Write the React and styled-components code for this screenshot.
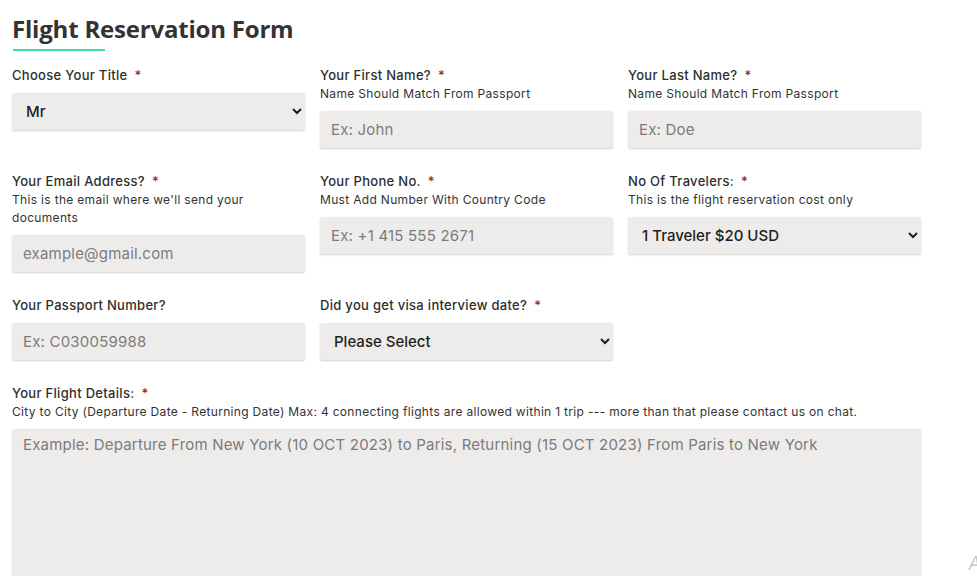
import styled, { createGlobalStyle } from "styled-components";

const GlobalStyle = createGlobalStyle`
  body {
    margin: 0;
    background: #fff;
    font-family: Inter, "Open Sans", sans-serif;
    color: #2b2b2b;
  }
`;

const Page = styled.div`
  padding: 14px 12px 0 12px;
  width: 908px;
`;

const Heading = styled.h1`
  margin: 0;
  font-family: "Open Sans", sans-serif;
  font-size: 24px;
  font-weight: 700;
  color: #333;
  line-height: 30px;
  letter-spacing: -0.2px;
`;

const Underline = styled.div`
  width: 92px;
  height: 1.5px;
  background: #3ee0a1;
  margin: 5px 0 0 1px;
`;

const Grid = styled.div`
  display: grid;
  grid-template-columns: repeat(3, 293px);
  column-gap: 15px;
  row-gap: 24px;
  align-items: start;
  margin-top: 15px;
`;

const Field = styled.div`
  display: flex;
  flex-direction: column;
  grid-column: ${(p) => (p.$wide ? "1 / -1" : "auto")};
`;

const Label = styled.label`
  font-size: 13px;
  font-weight: 500;
  line-height: 19px;
  letter-spacing: 0.3px;
  color: #2e2e2e;
  margin-bottom: ${(p) => (p.$hasHint ? "0" : "8px")};
`;

const Star = styled.span`
  color: #a01d24;
  margin-left: 7px;
`;

const Hint = styled.div`
  font-size: 12px;
  line-height: 18px;
  letter-spacing: 0.32px;
  color: #333;
  margin-bottom: 8px;
`;

const fieldBox = `
  box-sizing: border-box;
  width: 100%;
  border: none;
  border-radius: 2px;
  background: #eeeceb;
  box-shadow: 0 1px 2px rgba(0, 0, 0, 0.18);
  font-family: inherit;
  font-size: 15px;
  outline: none;
`;

const Input = styled.input`
  ${fieldBox}
  height: 37px;
  padding: 0 11px;
  letter-spacing: 0.2px;
  color: #333;
  &::placeholder {
    color: #7b7b7b;
  }
`;

const Select = styled.select`
  ${fieldBox}
  height: 37px;
  padding: 0 6px 0 10px;
  font-weight: 500;
  color: #1e1e1e;
`;

const TextArea = styled.textarea`
  ${fieldBox}
  height: 147px;
  padding: 6px 11px;
  letter-spacing: 0.2px;
  color: #333;
  resize: none;
  &::placeholder {
    color: #7b7b7b;
  }
`;

const Watermark = styled.div`
  position: fixed;
  right: -4px;
  top: 553px;
  font-size: 18px;
  font-style: italic;
  color: #c8c8c8;
`;

const App = () => {
  return (
    <>
      <GlobalStyle />
      <Page>
        <Heading>Flight Reservation Form</Heading>
        <Underline />
        <Grid>
          <Field>
            <Label>Choose Your Title<Star>*</Star></Label>
            <Select defaultValue="Mr">
              <option>Mr</option>
              <option>Mrs</option>
              <option>Ms</option>
            </Select>
          </Field>
          <Field>
            <Label $hasHint>Your First Name?<Star>*</Star></Label>
            <Hint>Name Should Match From Passport</Hint>
            <Input placeholder="Ex: John" />
          </Field>
          <Field>
            <Label $hasHint>Your Last Name?<Star>*</Star></Label>
            <Hint>Name Should Match From Passport</Hint>
            <Input placeholder="Ex: Doe" />
          </Field>

          <Field>
            <Label $hasHint>Your Email Address?<Star>*</Star></Label>
            <Hint>This is the email where we'll send your<br />documents</Hint>
            <Input placeholder="example@gmail.com" />
          </Field>
          <Field>
            <Label $hasHint>Your Phone No.<Star>*</Star></Label>
            <Hint>Must Add Number With Country Code</Hint>
            <Input placeholder="Ex: +1 415 555 2671" />
          </Field>
          <Field>
            <Label $hasHint>No Of Travelers:<Star>*</Star></Label>
            <Hint>This is the flight reservation cost only</Hint>
            <Select defaultValue="1">
              <option value="1">1 Traveler $20 USD</option>
              <option value="2">2 Travelers $40 USD</option>
            </Select>
          </Field>

          <Field>
            <Label>Your Passport Number?</Label>
            <Input placeholder="Ex: C030059988" />
          </Field>
          <Field>
            <Label>Did you get visa interview date?<Star>*</Star></Label>
            <Select defaultValue="">
              <option value="">Please Select</option>
              <option>Yes</option>
              <option>No</option>
            </Select>
          </Field>
          <div />

          <Field $wide>
            <Label $hasHint>Your Flight Details:<Star>*</Star></Label>
            <Hint>City to City (Departure Date - Returning Date) Max: 4 connecting flights are allowed within 1 trip --- more than that please contact us on chat.</Hint>
            <TextArea placeholder="Example: Departure From New York (10 OCT 2023) to Paris, Returning (15 OCT 2023) From Paris to New York" />
          </Field>
        </Grid>
      </Page>
      <Watermark>A</Watermark>
    </>
  );
};

export default App;
